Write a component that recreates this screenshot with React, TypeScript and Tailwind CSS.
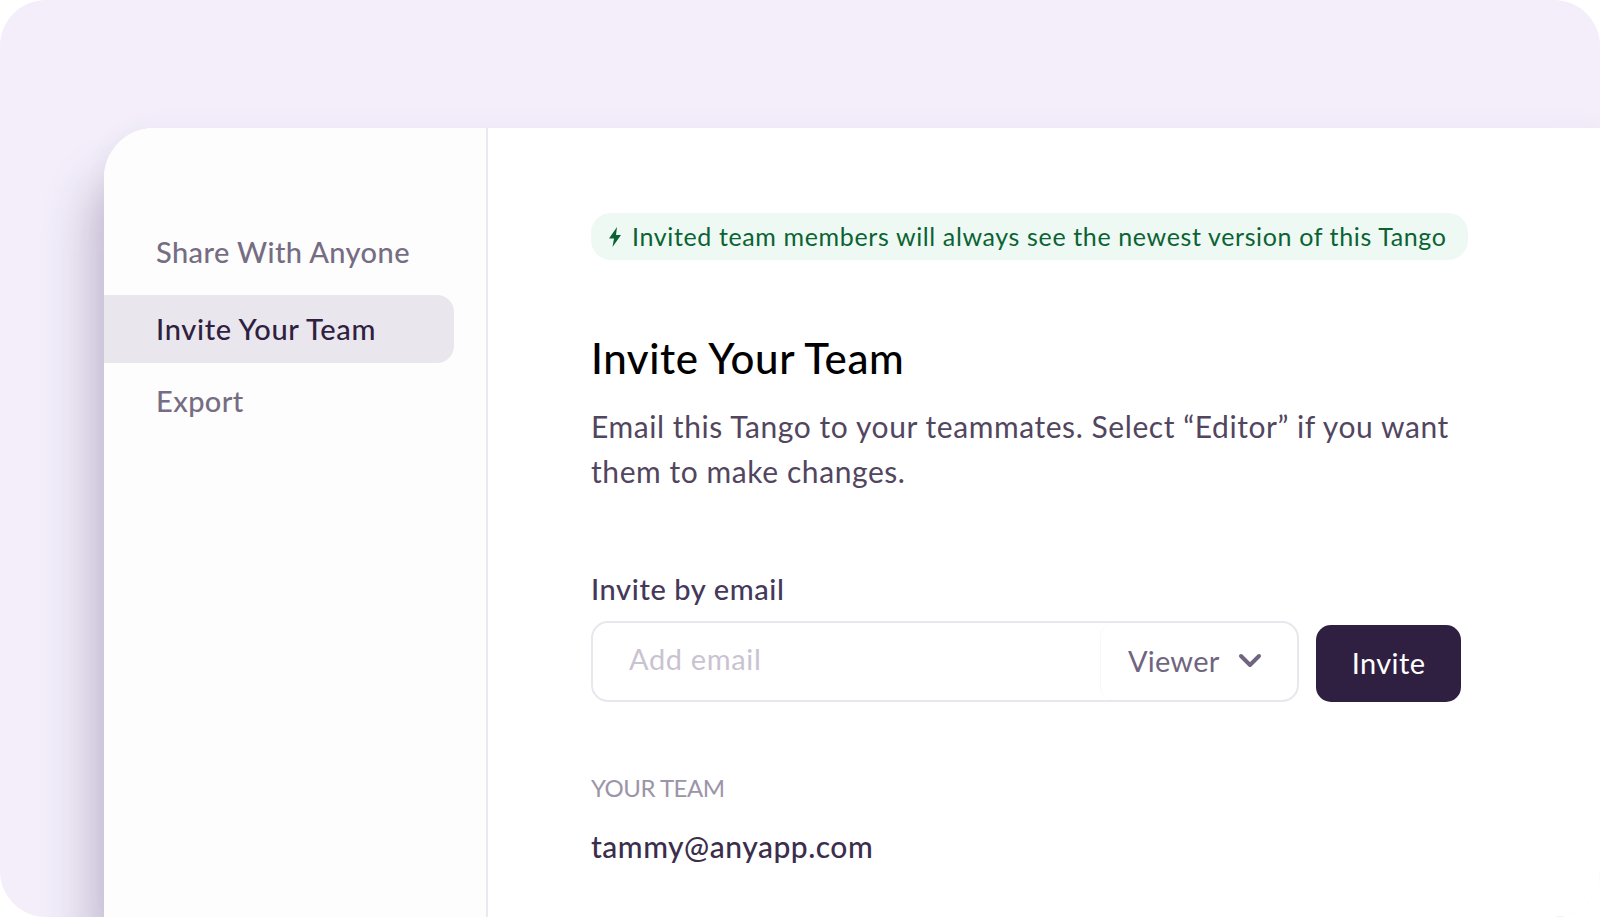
function NavItem({ label, active }: { label: string; active?: boolean }) {
  return (
    <div
      className={
        active
          ? "w-[350px] h-[68px] flex items-center pl-[52px] rounded-r-[17px] bg-[#e9e6ed] text-[#2f1f40] tracking-[0.65px]"
          : "w-[350px] h-[68px] flex items-center pl-[52px] text-[#766d83]"
      }
    >
      {label}
    </div>
  );
}

export default function App() {
  return (
    <div className="w-[1600px] h-[917px] bg-white overflow-hidden font-['Lato',sans-serif]">
      <div className="w-full h-full rounded-[46px] bg-[#f3eefa] pt-[128px] pl-[104px] overflow-hidden">
        <div className="w-full h-full flex bg-white rounded-tl-[50px] shadow-[-16px_45px_45px_rgba(70,50,100,0.26),0_-4px_24px_rgba(70,50,100,0.03)]">
          <div className="w-[384px] shrink-0 h-full bg-[#fdfdfe] rounded-tl-[50px] border-r-2 border-[#ebe9ef] pt-[90px] text-[29px] tracking-[0.4px] font-medium">
            <div className="flex flex-col">
              <div className="mb-[9px]">
                <NavItem label="Share With Anyone" />
              </div>
              <div className="mb-[4px]">
                <NavItem label="Invite Your Team" active />
              </div>
              <NavItem label="Export" />
            </div>
          </div>
          <div className="flex-1 pl-[103px] pt-[85px]">
            <div className="w-[877px] h-[47px] flex items-center pl-[17px] gap-[10px] rounded-[20px] bg-[#eef9f4] text-[#0b6333] text-[25px] tracking-[0.63px]">
              <svg width="14" height="20" viewBox="0 0 14 20" fill="currentColor">
                <path d="M9 0 1 11.5h5L4.5 20 13 8H8z" />
              </svg>
              <span>Invited team members will always see the newest version of this Tango</span>
            </div>
            <h1 className="mt-[70px] text-[42px] leading-[56px] font-medium text-black tracking-[0.6px]">Invite Your Team</h1>
            <p className="mt-[18px] w-[880px] text-[30px] leading-[45px] tracking-[0.57px] text-[#52465f]">
              Email this Tango to your teammates. Select “Editor” if you want them to make changes.
            </p>
            <div className="mt-[75px] text-[29px] leading-[40px] font-medium text-[#45385a] tracking-[0.6px]">Invite by email</div>
            <div className="mt-[12px] flex items-end gap-[17px]">
              <div className="w-[708px] h-[81px] flex rounded-[17px] border-2 border-[#e9e7ed] bg-white">
                <div className="flex-1 flex items-center pl-[36px] pb-[6px] text-[29px] tracking-[0.65px] text-[#c9c3d1]">Add email</div>
                <div className="w-[197px] flex items-center pl-[27px] gap-[19px] pb-[1px] border-l border-[#f7f6f9] rounded-l-[14px] text-[#6f6580] text-[29px] tracking-[0.2px]">
                  <span>Viewer</span>
                  <svg width="24" height="16" viewBox="0 0 24 16" fill="none" stroke="currentColor" strokeWidth="4" strokeLinecap="round" strokeLinejoin="round">
                    <path d="M3 3l9 9 9-9" />
                  </svg>
                </div>
              </div>
              <button className="w-[145px] h-[77px] pb-[2px] rounded-[15px] bg-[#2f1f40] text-white text-[29px] tracking-[0.4px]">Invite</button>
            </div>
            <div className="mt-[69px] text-[24px] leading-[34px] text-[#9c94a8] tracking-[-0.5px]">YOUR TEAM</div>
            <div className="mt-[21px] text-[30px] leading-[40px] font-medium text-[#3b2e4c] tracking-[0.5px]">tammy@anyapp.com</div>
          </div>
        </div>
      </div>
    </div>
  );
}
